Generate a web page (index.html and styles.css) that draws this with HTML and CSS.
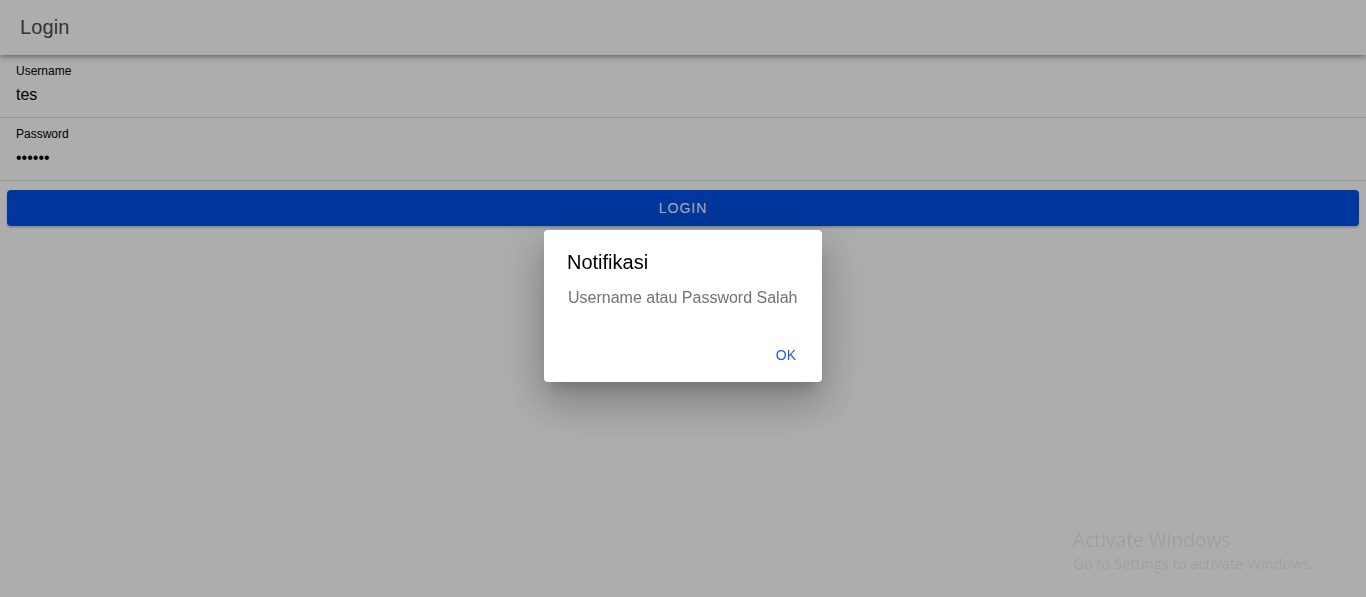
FILE: index.html
```html
<!DOCTYPE html>
<html>
<head>
<meta charset="utf-8">
<link rel="stylesheet" href="styles.css">
</head>
<body>
<div class="app">
  <header class="toolbar"><div class="title">Login</div></header>
  <main class="content">
    <div class="item">
      <label class="label">Username</label>
      <div class="value">tes</div>
    </div>
    <div class="item">
      <label class="label">Password</label>
      <div class="value dots">&#8226;&#8226;&#8226;&#8226;&#8226;&#8226;</div>
    </div>
    <div class="btn-wrap"><button class="btn">LOGIN</button></div>
  </main>
</div>
<div class="backdrop">
  <div class="dialog">
    <h2 class="d-title">Notifikasi</h2>
    <div class="d-msg">Username atau Password Salah</div>
    <div class="d-actions"><button class="d-btn">OK</button></div>
  </div>
</div>
<div class="watermark">
  <div class="wm1">Activate Windows</div>
  <div class="wm2">Go to Settings to activate Windows.</div>
</div>
</body>
</html>
```
FILE: styles.css
```css
html, body { margin: 0; padding: 0; height: 100%; }
body { font-family: "Liberation Sans", Arial, sans-serif; background: #fff; overflow: hidden; }
.app { height: 100%; display: flex; flex-direction: column; }
.toolbar { height: 55px; display: flex; align-items: center; padding-left: 20px; box-shadow: 0 2px 4px -1px rgba(0,0,0,0.25), 0 4px 5px 0 rgba(0,0,0,0.16); position: relative; z-index: 1; background: #fff; }
.title { font-size: 20px; color: #4a4a4a; letter-spacing: 0.1px; }
.content { flex: 1; }
.item { padding-left: 16px; height: 62px; border-bottom: 1px solid #dedede; display: flex; flex-direction: column; }
.label { font-size: 12px; color: #000; margin-top: 9px; line-height: 14px; }
.value { font-size: 16px; color: #000; margin-top: 7px; line-height: 20px; }
.dots { font-size: 16px; margin-top: 7px; }
.btn-wrap { padding: 9px 7px 0 7px; }
.btn { width: 100%; height: 36px; border: 0; border-radius: 4px; background: #0052ea; color: #fff; font-family: "Liberation Sans", Arial, sans-serif; font-size: 14px; letter-spacing: 1px; box-shadow: 0 2px 2px rgba(0,0,0,0.2); }
.backdrop { position: fixed; inset: 0; background: rgba(0,0,0,0.32); display: flex; justify-content: center; align-items: flex-start; padding-top: 230px; z-index: 5; }
.dialog { width: 278px; height: 152px; background: #fff; border-radius: 4px; box-shadow: 0 11px 15px -7px rgba(0,0,0,0.2), 0 24px 38px 3px rgba(0,0,0,0.14), 0 9px 46px 8px rgba(0,0,0,0.12); display: flex; flex-direction: column; box-sizing: border-box; padding: 20px 23px 0 23px; }
.d-title { margin: 0; font-weight: normal; font-size: 20px; color: #000; line-height: 24px; }
.d-msg { margin-top: 14px; font-size: 16px; color: #737373; line-height: 20px; padding-left: 1px; }
.d-actions { display: flex; justify-content: flex-end; margin-top: 39px; }
.d-btn { border: 0; background: transparent; color: #1a62e8; font-family: "Liberation Sans", Arial, sans-serif; font-size: 14px; padding: 0; margin-right: 3px; }
.watermark { position: fixed; left: 1073px; top: 528px; z-index: 10; color: rgba(0,0,0,0.085); font-family: "Open Sans", "DejaVu Sans", sans-serif; }
.wm1 { font-size: 19.2px; line-height: 24px; }
.wm2 { font-size: 14.7px; line-height: 22px; }
```
